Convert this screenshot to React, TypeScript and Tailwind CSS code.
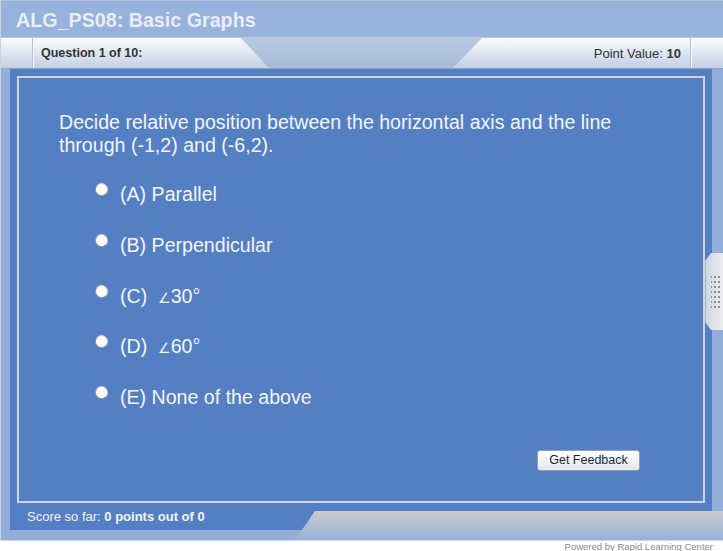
import React from 'react';

const options = [
  { key: 'A', label: '(A) Parallel' },
  { key: 'B', label: '(B) Perpendicular' },
  { key: 'C', label: '(C)', angle: '30°' },
  { key: 'D', label: '(D)', angle: '60°' },
  { key: 'E', label: '(E) None of the above' },
];

const SideHandle = () => (
  <div className="absolute right-0 top-[253px] w-[18px] h-[77px] bg-gradient-to-r from-[#cfd6e2] to-[#ececee] border-l border-[#a9b6cc] [clip-path:polygon(6px_0,100%_0,100%_100%,6px_100%,0_calc(100%-8px),0_8px)] flex flex-col items-center justify-center gap-[3px] pl-[2px]">
    {Array.from({ length: 7 }).map((_, r) => (
      <div key={r} className="flex gap-[2px]">
        <span className="w-[1px] h-[2px] bg-[#8a8e96]" />
        <span className="w-[2px] h-[2px] bg-[#8a8e96]" />
        <span className="w-[2px] h-[2px] bg-[#8a8e96]" />
      </div>
    ))}
  </div>
);

export default function App() {
  return (
    <div className="relative w-[723px] h-[551px] overflow-hidden bg-white font-['Liberation_Sans',Arial,sans-serif]">
      <div className="border-l border-[#ccd2dc] bg-[#93afd9]">
        {/* title */}
        <div className="h-[38px] flex items-center pl-[15px] pt-[3px] bg-[#97b2dc] border-t border-[#b3c6e4] border-b border-[#86a2cc]">
          <span className="text-[19.7px] font-bold text-[#e9eef8] leading-none">ALG_PS08: Basic Graphs</span>
        </div>

        {/* tab strip */}
        <div className="h-[31px] flex justify-between bg-gradient-to-b from-[#b9c9e1] to-[#a6bbd9] border-b border-[#8fa6cb]">
          <div className="w-[268px] flex bg-gradient-to-b from-[#fbfcfe] to-[#c2cfe3] [clip-path:polygon(0_0,240px_0,268px_100%,0_100%)]">
            <div className="w-[32px] border-r border-[#b6c0cf]" />
            <div className="border-l border-[#f4f7fb] flex items-center pl-[7px] pt-[1px]">
              <span className="text-[12.5px] font-bold text-[#333333]">Question 1 of 10:</span>
            </div>
          </div>
          <div className="w-[270px] flex justify-end bg-gradient-to-b from-[#fbfcfe] to-[#c2cfe3] [clip-path:polygon(29px_0,100%_0,100%_100%,0_100%)]">
            <div className="flex items-center pr-[9px] pt-[1px] border-r border-[#b6c0cf]">
              <span className="text-[13px] text-[#333333]">
                Point Value: <b>10</b>
              </span>
            </div>
            <div className="w-[32px] border-l border-[#f4f7fb]" />
          </div>
        </div>

        {/* body */}
        <div className="pl-[9px] pr-[11px] pb-[10px]">
          <div className="bg-[#557fc3] pt-[7px] px-[7px]">
            <div className="h-[427px] border-2 border-[#cdd5e1] flex flex-col">
              <div className="pl-[40px] pt-[33px] pr-[60px] text-[19.6px] leading-[23px] text-[#f2f5fb]">
                Decide relative position between the horizontal axis and the line through (-1,2) and (-6,2).
              </div>
              <div className="mt-[26px] flex flex-col">
                {options.map((o) => (
                  <div key={o.key} className="h-[50.75px] flex items-start pl-[76px]">
                    <span className="mt-[0px] w-[13px] h-[13px] rounded-full bg-white border border-[#8d97aa] border-r-[#c9cfda] border-t-[#c9cfda]" />
                    <span className="ml-[12px] text-[19.6px] leading-[23px] text-[#f2f5fb] whitespace-pre">
                      {o.label}
                      {o.angle && (
                        <>
                          {'  '}
                          <span className="font-['DejaVu_Sans',sans-serif] text-[14px]">∠</span>
                          {o.angle}
                        </>
                      )}
                    </span>
                  </div>
                ))}
              </div>
              <div className="mt-auto flex justify-end pr-[63px] pb-[30px]">
                <button className="w-[103px] h-[21px] rounded-[3px] border border-[#98a0ac] bg-gradient-to-b from-white to-[#e4e7ec] text-[12.5px] leading-none text-[#112a38]">
                  Get Feedback
                </button>
              </div>
            </div>
            <div className="h-[27px] pt-[6px] pl-[10px] text-[13px] leading-[15px] text-[#f2f5fb]">
              Score so far: <b>0 points out of 0</b>
            </div>
          </div>
        </div>
      </div>

      {/* bottom right gray bar */}
      <div className="absolute left-[295px] right-0 top-[511px] h-[29px] bg-gradient-to-b from-[#c8c9cd] to-[#98b1da] [clip-path:polygon(20px_0,100%_0,100%_100%,0_100%)]" />

      <SideHandle />

      {/* footer */}
      <div className="border-t border-[#d3d7de] flex justify-end pr-[10px]">
        <span className="text-[9.5px] leading-[11px] text-[#8a8a8a]">Powered by Rapid Learning Center</span>
      </div>
    </div>
  );
}
